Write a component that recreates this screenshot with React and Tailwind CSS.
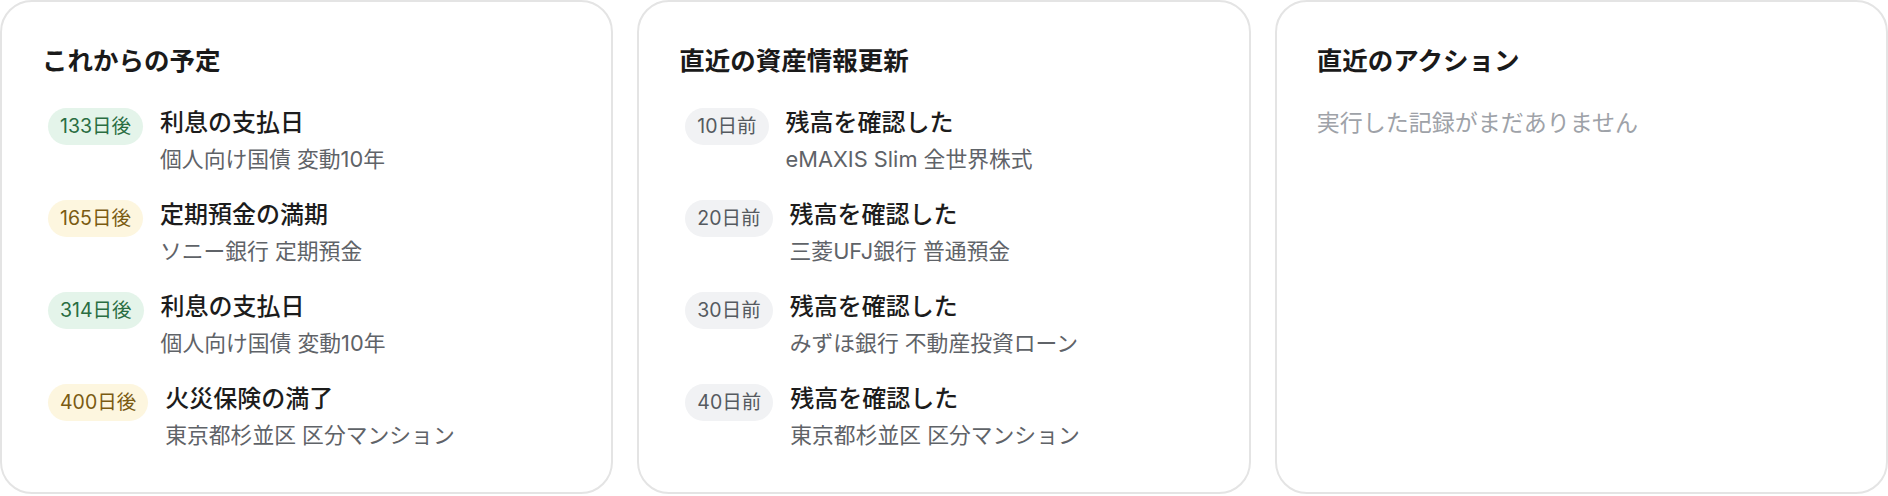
const upcoming = [
  { days: "133日後", tone: "green", title: "利息の支払日", sub: "個人向け国債 変動10年" },
  { days: "165日後", tone: "yellow", title: "定期預金の満期", sub: "ソニー銀行 定期預金" },
  { days: "314日後", tone: "green", title: "利息の支払日", sub: "個人向け国債 変動10年" },
  { days: "400日後", tone: "yellow", title: "火災保険の満了", sub: "東京都杉並区 区分マンション" },
];

const updates = [
  { days: "10日前", tone: "gray", title: "残高を確認した", sub: "eMAXIS Slim 全世界株式" },
  { days: "20日前", tone: "gray", title: "残高を確認した", sub: "三菱UFJ銀行 普通預金" },
  { days: "30日前", tone: "gray", title: "残高を確認した", sub: "みずほ銀行 不動産投資ローン" },
  { days: "40日前", tone: "gray", title: "残高を確認した", sub: "東京都杉並区 区分マンション" },
];

const badgeTone = {
  green: "bg-[#e4f4ea] text-[#2a6d42]",
  yellow: "bg-[#fdf6df] text-[#7a5b12]",
  gray: "bg-[#f1f2f4] text-[#555a60]",
};

function Card({ title, children }) {
  return (
    <div className="rounded-[32px] border-2 border-[#e4e4e4] bg-white px-[40px] pt-[42px] pb-[42px]">
      <h2 className="text-[25.5px] font-bold leading-[34px] text-[#1a1a1a]">{title}</h2>
      <div className="mt-[29px]">{children}</div>
    </div>
  );
}

function EventList({ items }) {
  return (
    <ul className="flex flex-col gap-[25px] pl-[6px]">
      {items.map((item, i) => (
        <li key={i} className="flex items-start gap-[17px]">
          <span
            className={`mt-[1px] shrink-0 rounded-full px-[12px] py-[6px] text-[19.5px] leading-[25px] ${badgeTone[item.tone]}`}
          >
            {item.days}
          </span>
          <div>
            <p className="text-[24px] font-medium leading-[32px] text-[#1c1c1c]">{item.title}</p>
            <p className="mt-[5px] text-[21.8px] leading-[30px] text-[#5f6368]">{item.sub}</p>
          </div>
        </li>
      ))}
    </ul>
  );
}

export default function App() {
  return (
    <div
      className="grid grid-cols-3 gap-6 bg-white"
      style={{ fontFamily: 'Inter, "Noto Sans CJK JP", sans-serif' }}
    >
      <Card title="これからの予定">
        <EventList items={upcoming} />
      </Card>
      <Card title="直近の資産情報更新">
        <EventList items={updates} />
      </Card>
      <Card title="直近のアクション">
        <p className="text-[23px] leading-[32px] text-[#9ea2a8]">実行した記録がまだありません</p>
      </Card>
    </div>
  );
}
